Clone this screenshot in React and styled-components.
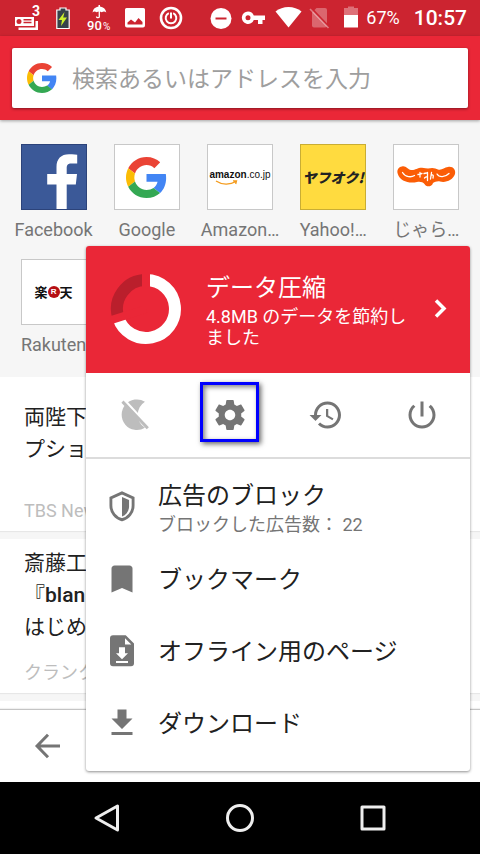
import React from "react"
import styled, { createGlobalStyle } from "styled-components"

const GlobalStyle = createGlobalStyle`
  * {
    box-sizing: border-box;
  }

  body {
    margin: 0;
    background: #fff;
    font-family: Roboto, "Noto Sans CJK JP", sans-serif;
    color: #212121;
  }

  button {
    margin: 0;
    padding: 0;
    border: 0;
    background: none;
    font: inherit;
    color: inherit;
    text-align: left;
    cursor: pointer;
  }

  svg {
    display: block;
    flex-shrink: 0;
  }
`

const Screen = styled.div`
  position: relative;
  display: flex;
  flex-direction: column;
  height: 100vh;
  overflow: hidden;
`

/* status bar */

const StatusBar = styled.div`
  display: flex;
  align-items: center;
  justify-content: space-between;
  height: 36px;
  flex-shrink: 0;
  padding: 0 13px 0 9px;
  background: #cc2430;
  color: #fff;
`

const StatusGroup = styled.div`
  display: flex;
  align-items: center;

  svg {
    overflow: visible;
  }
`

const StatusText = styled.span`
  font-size: 18px;
  line-height: 36px;
  margin-left: 1px;
`

const Clock = styled.span`
  font-size: 21px;
  font-weight: 500;
  line-height: 36px;
  margin-left: 14px;
`

/* address bar */

const Header = styled.header`
  position: relative;
  flex-shrink: 0;
  padding: 12px;
  background: #ea2737;
  box-shadow: 0 1px 3px rgba(0, 0, 0, 0.35);
`

const SearchBox = styled.label`
  display: flex;
  align-items: center;
  gap: 15px;
  height: 60px;
  padding: 0 15px;
  background: #fff;
  border-radius: 2px;
  box-shadow: 0 1px 3px rgba(0, 0, 0, 0.45);
`

const SearchInput = styled.input`
  flex: 1;
  min-width: 0;
  padding: 3px 0 0;
  border: 0;
  outline: 0;
  background: none;
  font: inherit;
  font-size: 23px;
  line-height: 36px;

  &::placeholder {
    color: #9e9e9e;
  }
`

/* page content */

const Content = styled.main`
  flex: 1;
  min-height: 0;
  overflow: hidden;
  background: #f6f6f6;
`

const SpeedDial = styled.nav`
  display: grid;
  grid-template-columns: repeat(5, 1fr);
  row-gap: 17px;
  padding: 24px 7px 20px;
`

const DialLink = styled.a`
  display: flex;
  flex-direction: column;
  align-items: center;
  gap: 8px;
  font-size: 18px;
  line-height: 24px;
  color: #757575;
  text-decoration: none;
  white-space: nowrap;
`

const Tile = styled.span`
  display: flex;
  align-items: center;
  justify-content: center;
  width: 66px;
  height: 66px;
  overflow: hidden;
  border: 1px solid ${({ $border }) => $border || "#c8c8c8"};
  background: ${({ $bg }) => $bg || "#fff"};
`

const AmazonLogo = styled.span`
  font-family: "Liberation Sans", sans-serif;
  font-size: 10px;
  line-height: 12px;
  color: #111;

  b {
    font-weight: 700;
  }

  svg {
    margin: -1px 0 0 6px;
  }
`

const AuctionLogo = styled.span`
  font-family: "Noto Sans CJK JP", sans-serif;
  font-size: 14px;
  font-style: italic;
  font-weight: 900;
  line-height: 20px;
  color: #222;
`

const RakutenLogo = styled.span`
  display: flex;
  align-items: center;
  font-family: "Noto Sans CJK JP", sans-serif;
  font-size: 13px;
  font-weight: 700;
  line-height: 16px;
  color: #111;
`

const RakutenMark = styled.span`
  width: 12px;
  height: 12px;
  border-radius: 50%;
  background: #b50f14;
  color: #fff;
  font-family: "Liberation Sans", sans-serif;
  font-size: 8px;
  line-height: 12px;
  text-align: center;
`

const NewsList = styled.div`
  display: flex;
  flex-direction: column;
  gap: 8px;
`

const NewsCard = styled.article`
  height: 154px;
  padding: 0 24px;
  background: #fff;
  box-shadow: 0 1px 1px rgba(0, 0, 0, 0.06);
`

const NewsTitle = styled.h2`
  display: flex;
  flex-direction: column;
  justify-content: center;
  height: 112px;
  margin: 0;
  font-size: 21px;
  font-weight: 400;
  line-height: 32px;

  b {
    font-weight: 500;
  }
`

const NewsSource = styled.p`
  margin: 0;
  font-size: 18px;
  line-height: 44px;
  color: #bdbdbd;
`

/* bottom bars */

const BottomBar = styled.footer`
  display: flex;
  align-items: center;
  flex-shrink: 0;
  height: 73px;
  padding: 0 30px;
  background: #fff;
  border-top: 1px solid #c4c4c4;
  box-shadow: 0 -1px 1px rgba(0, 0, 0, 0.06);
  color: #757575;
`

const SystemNav = styled.div`
  display: grid;
  grid-template-columns: repeat(3, 1fr);
  flex-shrink: 0;
  height: 72px;
  padding: 0 40px;
  background: #000;
`

const SystemButton = styled.button`
  display: flex;
  align-items: center;
  justify-content: center;
`

/* menu */

const Menu = styled.section`
  position: absolute;
  top: 246px;
  right: 10px;
  width: 80%;
  background: #fff;
  border-radius: 3px;
  box-shadow: 0 1px 3px rgba(0, 0, 0, 0.45);
`

const Savings = styled.button`
  display: flex;
  align-items: center;
  width: 100%;
  height: 127px;
  padding: 0 12px 2px 24px;
  background: #ea2737;
  border-radius: 3px 3px 0 0;
  color: #fff;
`

const SavingsText = styled.span`
  flex: 1;
  padding: 0 12px 0 24px;
  font-size: 18px;
  line-height: 21px;
`

const SavingsTitle = styled.span`
  display: block;
  font-size: 24px;
  line-height: 36px;
`

const Toolbar = styled.div`
  display: grid;
  grid-template-columns: repeat(4, 1fr);
  height: 86px;
  border-bottom: 2px solid #dcdcdc;
`

const ToolButton = styled.button`
  position: relative;
  display: flex;
  align-items: center;
  justify-content: center;
  color: ${({ $off }) => ($off ? "#bdbdbd" : "#757575")};
`

const Highlight = styled.span`
  position: absolute;
  top: 9px;
  left: 18px;
  width: 59px;
  height: 60px;
  border: 3px solid #0000ff;
  box-shadow: 2px 2px 5px rgba(0, 0, 0, 0.6),
    inset 2px 2px 5px rgba(0, 0, 0, 0.5);
`

const MenuList = styled.ul`
  margin: 0;
  padding: 12px 0;
  list-style: none;
`

const MenuItem = styled.button`
  display: flex;
  align-items: center;
  gap: 18px;
  width: 100%;
  height: 72px;
  padding: 0 18px;

  svg {
    color: #757575;
  }
`

const MenuText = styled.span`
  padding-top: 2px;
`

const MenuLabel = styled.span`
  display: block;
  font-size: 24px;
  line-height: 32px;
`

const MenuNote = styled.span`
  display: block;
  font-size: 18px;
  line-height: 25px;
  color: #757575;
`

const Icon = ({ children }) => (
  <svg width="36" height="36" viewBox="0 0 24 24" fill="currentColor">
    {children}
  </svg>
)

const GoogleLogo = ({ size }) => (
  <svg width={size} height={size} viewBox="0 0 48 48">
    <path
      fill="#EA4335"
      d="M24 9.5c3.54 0 6.71 1.22 9.21 3.6l6.85-6.85C35.9 2.38 30.47 0 24 0 14.62 0 6.51 5.38 2.56 13.22l7.98 6.19C12.43 13.72 17.74 9.5 24 9.5z"
    />
    <path
      fill="#4285F4"
      d="M46.98 24.55c0-1.57-.15-3.09-.38-4.55H24v9.02h12.94c-.58 2.96-2.26 5.48-4.78 7.18l7.73 6c4.51-4.18 7.09-10.36 7.09-17.65z"
    />
    <path
      fill="#FBBC05"
      d="M10.53 28.59c-.48-1.45-.76-2.99-.76-4.59s.27-3.14.76-4.59l-7.98-6.19C.92 16.46 0 20.12 0 24c0 3.88.92 7.54 2.56 10.78l7.97-6.19z"
    />
    <path
      fill="#34A853"
      d="M24 48c6.48 0 11.93-2.13 15.89-5.81l-7.73-6c-2.15 1.45-4.92 2.3-8.16 2.3-6.26 0-11.57-4.22-13.47-9.91l-7.98 6.19C6.51 42.62 14.62 48 24 48z"
    />
  </svg>
)

const FacebookLogo = () => (
  <svg width="66" height="66" viewBox="0 0 66 66">
    <path
      fill="#fff"
      d="M35.5 66V40.5h-9.3V30h9.3v-7c0-8 4.5-12.7 12.5-12.7 3 0 6 .1 8.2.4v8.8h-5.7c-4 0-4.8 1.7-4.8 5V30H56l-1.2 10.5h-9.1V66z"
    />
  </svg>
)

const JalanLogo = () => (
  <svg width="60" height="24" viewBox="0 0 60 24">
    <path
      fill="#fb5d06"
      d="M6 1.5C10 .5 11.5 4.5 15 5c4 .5 6-2.200 11-2.200q4 .7 6 .7 6-1.500 10 1C46 5.500 48 2.500 52 2c5-1 8 3 7 7-2 6-9 9-15 7.500-3-.5-5 .5-7 1.500-1 4-7 4.500-8.500 1-1.500-2-4.500-2.500-7.500-2C13 19 4 16 1.800 9 .5 5 2.500 2 6 1.500z"
    />
    <g fill="none" stroke="#fff" strokeWidth="1.300" strokeLinecap="round">
      <path d="M6.500 7.500c3 5 9 5 12 3M53 8.500c-4 4-10 4-12 .5" />
      <path d="M22 9.500l4-1M24 7.500v4.500M28 8.500l2.500-.5M31.500 7.500v8M28.500 13c1-1 2-1.500 3-1M35.500 7.500L34.500 14M35.500 10c2-.5 2 1 1.500 3" />
    </g>
  </svg>
)

const StatusIcons = () => (
  <>
    <StatusGroup>
      <svg width="36" height="36" viewBox="0 0 36 36" fill="#fff">
        <path
          fillRule="evenodd"
          d="M6 17h19v9H6zM10 19a2.500 2.500 0 1 0 0 5 2.500 2.500 0 0 0 0-5zM14.500 19v1.400h8V19zM14.500 21.800v1.400h8v-1.400z"
        />
        <path d="M26.500 21H29v9H9.500v-2.500h17z" />
        <text x="23" y="16" fontSize="14" fontWeight="700">
          3
        </text>
      </svg>
      <svg width="36" height="36" viewBox="0 0 36 36">
        <path
          d="M15 8h6v2h3.200v18.500H11.800V10H15z"
          fill="#37424a"
          stroke="#fff"
          strokeWidth="1.200"
        />
        <path d="M19.500 12l-6 8h3.500l-1 6 6-8.500h-3.800z" fill="#cdf12c" />
      </svg>
      <svg width="36" height="36" viewBox="0 0 36 36" fill="#fff">
        <path d="M11.500 12.500C12 8.800 14.500 7 17.500 6.500V5H19v1.500c3.500.5 5.500 2.300 6.300 6-1.500-1.300-3-1.300-4.500-.2-1.600-1.200-3.600-1.200-5.200 0-1.400-1-2.800-1-4.100.2z" />
        <path
          d="M18.300 11v5.500c0 1.600-2.800 1.600-2.800 0"
          fill="none"
          stroke="#fff"
          strokeWidth="1.300"
        />
        <text x="6" y="30" fontSize="13" fontWeight="500">
          90
        </text>
        <text x="22" y="30" fontSize="10">
          %
        </text>
      </svg>
      <svg width="36" height="36" viewBox="0 0 36 36" fill="#fff">
        <path
          fillRule="evenodd"
          d="M9.500 8h17a1.500 1.500 0 0 1 1.500 1.500v16a2 2 0 0 1-2 2H10a2 2 0 0 1-2-2v-16A1.500 1.500 0 0 1 9.500 8zM10.500 24.500h15V22l-4-4-3.500 4.500-4-3-3.500 3z"
        />
      </svg>
      <svg
        width="36"
        height="36"
        viewBox="0 0 36 36"
        fill="none"
        stroke="#fff"
      >
        <circle cx="18" cy="18" r="10" strokeWidth="2.600" />
        <path
          d="M15.800 13.200a5.300 5.300 0 1 0 4.400 0M18 12.500v6"
          strokeWidth="2"
        />
      </svg>
    </StatusGroup>
    <StatusGroup>
      <svg width="32" height="36" viewBox="0 0 32 36">
        <circle cx="16" cy="18.500" r="10.500" fill="#fff" />
        <path d="M10.500 18.500h11" stroke="#cc2430" strokeWidth="2" />
      </svg>
      <svg width="32" height="36" viewBox="0 0 32 36" fill="#fff">
        <path
          fillRule="evenodd"
          d="M11 11.500a6.200 6.200 0 0 1 5.800 4H28V20h-2.500v4H21v-4h-4.200A6.200 6.200 0 1 1 11 11.500zM11 15.300a2.500 2.500 0 1 0 0 5 2.500 2.500 0 0 0 0-5z"
        />
      </svg>
      <svg width="32" height="36" viewBox="0 0 32 36" fill="#fff">
        <path d="M19.500 27.500L6.500 11.500c7-6 19-6 26 0z" />
      </svg>
      <svg width="32" height="36" viewBox="0 0 32 36">
        <path
          d="M15.500 8H24a2 2 0 0 1 2 2v15.500a2 2 0 0 1-2 2H13a2 2 0 0 1-2-2V12.500z"
          fill="#fff"
          opacity="0.300"
        />
        <path d="M10.500 8.500L29 28" stroke="#cc2430" strokeWidth="2" />
        <path
          d="M9 9l18.500 19"
          stroke="#fff"
          strokeWidth="1.600"
          opacity="0.400"
        />
      </svg>
      <svg width="32" height="36" viewBox="0 0 32 36" fill="#fff">
        <path d="M11 8h4V6.500h6V8h4v7H11z" opacity="0.350" />
        <path d="M11 15h14v12.500H11z" />
      </svg>
      <StatusText>67%</StatusText>
      <Clock>10:57</Clock>
    </StatusGroup>
  </>
)

const Donut = () => (
  <svg width="72" height="72" viewBox="-36 -36 72 72" fill="none">
    <g strokeWidth="12">
      <path d="M0 -29A29 29 0 0 0 -27.700 8.700" stroke="#ba1f2c" />
      <path d="M0 -29A29 29 0 1 1 -27.700 8.700" stroke="#fff" />
    </g>
    <path d="M0 0V-36M0 0L-36 11.400" stroke="#ea2737" strokeWidth="8" />
  </svg>
)

const PrivateOffIcon = () => (
  <Icon>
    <path d="M19.300 3.100A10.200 10.200 0 1 0 19.300 20.500A10.300 10.300 0 0 1 19.300 3.100z" />
    <path d="M4.300 .8L22 20.200" stroke="#fff" strokeWidth="2" />
    <path d="M4.300 3.100L21.200 20.800" stroke="currentColor" strokeWidth="2" />
  </Icon>
)

const SettingsIcon = () => (
  <Icon>
    <path d="M19.430 12.980c.04-.32.07-.64.07-.98s-.03-.66-.07-.98l2.110-1.650c.19-.15.24-.42.12-.64l-2-3.460c-.12-.22-.39-.3-.61-.22l-2.490 1c-.52-.4-1.080-.73-1.690-.98l-.38-2.650C14.460 2.180 14.250 2 14 2h-4c-.25 0-.46.18-.49.42l-.38 2.650c-.61.25-1.170.59-1.690.98l-2.490-1c-.23-.09-.49 0-.61.22l-2 3.460c-.13.22-.07.49.12.64l2.110 1.650c-.04.32-.07.65-.07.98s.03.66.07.98l-2.110 1.650c-.19.15-.24.42-.12.64l2 3.460c.12.22.39.3.61.22l2.490-1c.52.4 1.080.73 1.690.98l.38 2.650c.03.24.24.42.49.42h4c.25 0 .46-.18.49-.42l.38-2.650c.61-.25 1.170-.59 1.690-.98l2.490 1c.23.09.49 0 .61-.22l2-3.460c.12-.22.07-.49-.12-.64l-2.110-1.650zM12 15.500c-1.930 0-3.500-1.570-3.500-3.500s1.570-3.500 3.500-3.500 3.500 1.570 3.500 3.500-1.570 3.500-3.500 3.500z" />
  </Icon>
)

const HistoryIcon = () => (
  <Icon>
    <path d="M13 3c-4.970 0-9 4.030-9 9H1l3.890 3.890.07.14L9 12H6c0-3.870 3.130-7 7-7s7 3.130 7 7-3.130 7-7 7c-1.930 0-3.680-.79-4.940-2.060l-1.420 1.420C8.270 19.990 10.510 21 13 21c4.970 0 9-4.030 9-9s-4.030-9-9-9zm-1 5v5l4.280 2.540.72-1.210-3.500-2.080V8H12z" />
  </Icon>
)

const PowerIcon = () => (
  <Icon>
    <path d="M13 3h-2v10h2V3zm4.830 2.170l-1.420 1.420C17.990 7.860 19 9.810 19 12c0 3.870-3.130 7-7 7s-7-3.130-7-7c0-2.190 1.010-4.140 2.580-5.420L6.170 5.170C4.230 6.820 3 9.260 3 12c0 4.970 4.030 9 9 9s9-4.030 9-9c0-2.740-1.230-5.180-3.170-6.830z" />
  </Icon>
)

const ShieldIcon = () => (
  <Icon>
    <path
      d="M12 2.600L4.600 5.900V11c0 4.700 3.200 8.400 7.400 9.500 4.200-1.100 7.400-4.800 7.400-9.500V5.900z"
      fill="none"
      stroke="currentColor"
      strokeWidth="1.900"
    />
    <path d="M12 5.300l4.700 2.100V11.500c0 3.200-1.800 5.800-4.700 6.800z" />
  </Icon>
)

const BookmarkIcon = () => (
  <Icon>
    <path d="M17 3H7c-1.100 0-1.990.9-1.990 2L5 21l7-3 7 3V5c0-1.100-.9-2-2-2z" />
  </Icon>
)

const OfflinePageIcon = () => (
  <Icon>
    <path
      fillRule="evenodd"
      d="M6 1.500h8.500L20 7v13.200a2 2 0 0 1-2 2H6a2 2 0 0 1-2-2V3.500a2 2 0 0 1 2-2zM14 3.500v4.200h4.200zM10 9.500v4H8l4 4 4-4h-2v-4zM8 18.700V20h8v-1.300z"
    />
  </Icon>
)

const DownloadIcon = () => (
  <Icon>
    <path d="M19 9h-4V3H9v6H5l7 7 7-7zM5 18v2h14v-2H5z" />
  </Icon>
)

const dials = [
  {
    name: "Facebook",
    logo: <FacebookLogo />,
    bg: "#3b5998",
    border: "#2c437a",
  },
  { name: "Google", logo: <GoogleLogo size={41} /> },
  {
    name: "Amazon…",
    logo: (
      <AmazonLogo>
        <b>amazon</b>.co.jp
        <svg width="24" height="6" viewBox="0 0 24 6" fill="none" stroke="#f49b1c">
          <path d="M1 1c6 4 14 4 20 .5M18 .8l3.500 0-.8 3.200" strokeWidth="1.300" />
        </svg>
      </AmazonLogo>
    ),
  },
  {
    name: "Yahoo!…",
    logo: <AuctionLogo>ヤフオク!</AuctionLogo>,
    bg: "#ffdb3f",
    border: "#c9ad34",
  },
  { name: "じゃら…", logo: <JalanLogo /> },
  {
    name: "Rakuten",
    logo: (
      <RakutenLogo>
        楽<RakutenMark>R</RakutenMark>天
      </RakutenLogo>
    ),
  },
]

const menuItems = [
  {
    label: "広告のブロック",
    note: "ブロックした広告数： 22",
    icon: <ShieldIcon />,
  },
  { label: "ブックマーク", icon: <BookmarkIcon /> },
  { label: "オフライン用のページ", icon: <OfflinePageIcon /> },
  { label: "ダウンロード", icon: <DownloadIcon /> },
]

const App = () => {
  return (
    <>
      <GlobalStyle />
      <Screen>
        <StatusBar>
          <StatusIcons />
        </StatusBar>
        <Header>
          <SearchBox>
            <GoogleLogo size={30} />
            <SearchInput
              type="text"
              aria-label="検索"
              placeholder="検索あるいはアドレスを入力"
            />
          </SearchBox>
        </Header>
        <Content>
          <SpeedDial>
            {dials.map(({ name, logo, bg, border }) => (
              <DialLink href="#" key={name}>
                <Tile $bg={bg} $border={border}>
                  {logo}
                </Tile>
                {name}
              </DialLink>
            ))}
          </SpeedDial>
          <NewsList>
            <NewsCard>
              <NewsTitle>
                <span>両陛下</span>
                <span>プショ</span>
              </NewsTitle>
              <NewsSource>TBS News</NewsSource>
            </NewsCard>
            <NewsCard>
              <NewsTitle>
                <span>斎藤工</span>
                <span>
                  『<b>blan</b>
                </span>
                <span>はじめ</span>
              </NewsTitle>
              <NewsSource>クランク</NewsSource>
            </NewsCard>
            <NewsCard />
          </NewsList>
        </Content>
        <BottomBar>
          <button aria-label="戻る">
            <Icon>
              <path
                d="M20 12H5M12 4.500L4.700 12l7.300 7.500"
                fill="none"
                stroke="currentColor"
                strokeWidth="2"
              />
            </Icon>
          </button>
        </BottomBar>
        <SystemNav>
          <SystemButton aria-label="Back">
            <svg width="30" height="30" viewBox="0 0 30 30" fill="none">
              <path
                d="M25.500 3v24L4 15z"
                stroke="#eee"
                strokeWidth="3"
                strokeLinejoin="round"
              />
            </svg>
          </SystemButton>
          <SystemButton aria-label="Home">
            <svg width="30" height="30" viewBox="0 0 30 30" fill="none">
              <circle cx="15" cy="15" r="12.500" stroke="#eee" strokeWidth="3" />
            </svg>
          </SystemButton>
          <SystemButton aria-label="Recents">
            <svg width="30" height="30" viewBox="0 0 30 30" fill="none">
              <rect
                x="4"
                y="4"
                width="22"
                height="22"
                stroke="#eee"
                strokeWidth="3"
                strokeLinejoin="round"
              />
            </svg>
          </SystemButton>
        </SystemNav>

        <Menu>
          <Savings>
            <Donut />
            <SavingsText>
              <SavingsTitle>データ圧縮</SavingsTitle>
              4.8MB のデータを節約しました
            </SavingsText>
            <svg width="36" height="36" viewBox="0 0 36 36" fill="none">
              <path d="M14 9.500l8 8-8 8" stroke="#fff" strokeWidth="3.500" />
            </svg>
          </Savings>
          <Toolbar>
            <ToolButton $off aria-label="プライベート">
              <PrivateOffIcon />
            </ToolButton>
            <ToolButton aria-label="設定">
              <SettingsIcon />
              <Highlight />
            </ToolButton>
            <ToolButton aria-label="履歴">
              <HistoryIcon />
            </ToolButton>
            <ToolButton aria-label="終了">
              <PowerIcon />
            </ToolButton>
          </Toolbar>
          <MenuList>
            {menuItems.map(({ label, note, icon }) => (
              <li key={label}>
                <MenuItem>
                  {icon}
                  <MenuText>
                    <MenuLabel>{label}</MenuLabel>
                    {note && <MenuNote>{note}</MenuNote>}
                  </MenuText>
                </MenuItem>
              </li>
            ))}
          </MenuList>
        </Menu>
      </Screen>
    </>
  )
}

export default App
